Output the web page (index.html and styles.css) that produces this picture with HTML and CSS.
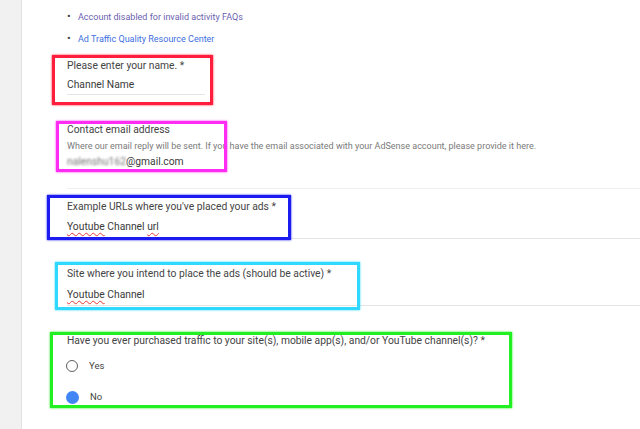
FILE: index.html
```html
<!DOCTYPE html>
<html lang="en">
<head>
    <meta charset="UTF-8" />
    <meta name="viewport" content="width=device-width, initial-scale=1.0" />
    <title>Invalid activity appeal form</title>
    <link rel="stylesheet" href="styles.css">
</head>
<body>
    <aside class="sidebar"></aside>

    <main class="form-page">
        <ul class="help-links">
            <li><a href="#" class="visited">Account disabled for invalid activity FAQs</a></li>
            <li><a href="#">Ad Traffic Quality Resource Center</a></li>
        </ul>

        <div class="field field-name">
            <span class="mark mark-red"></span>
            <div class="field-label">Please enter your name. *</div>
            <div class="field-value">Channel Name</div>
        </div>

        <div class="field field-email">
            <span class="mark mark-pink"></span>
            <div class="field-label">Contact email address</div>
            <div class="field-help">Where our email reply will be sent. If you have the email associated with your AdSense account, please provide it here.</div>
            <div class="field-value"><span class="blurred">nalenshu162</span>@gmail.com</div>
        </div>

        <div class="field field-urls">
            <span class="mark mark-blue"></span>
            <div class="field-label">Example URLs where you've placed your ads *</div>
            <div class="field-value"><span class="misspelled">Youtube</span> Channel <span class="misspelled">url</span></div>
        </div>

        <div class="field field-site">
            <span class="mark mark-cyan"></span>
            <div class="field-label">Site where you intend to place the ads (should be active) *</div>
            <div class="field-value"><span class="misspelled">Youtube</span> Channel</div>
        </div>

        <div class="field field-traffic">
            <span class="mark mark-green"></span>
            <div class="field-label">Have you ever purchased traffic to your site(s), mobile app(s), and/or YouTube channel(s)? *</div>
            <label class="radio-row">
                <span class="radio"></span>
                <span>Yes</span>
            </label>
            <label class="radio-row radio-no">
                <span class="radio checked"></span>
                <span>No</span>
            </label>
        </div>
    </main>
</body>
</html>
```

FILE: styles.css
```css
:root {
    --text-color: #444444;
    --help-color: #7a7a7a;
    --line-color: #e4e4e4;
    --link-color: #3d6fe0;
    --visited-color: #6b5fb0;
    --radio-blue: #4285f4;
}
html, body {
    margin: 0;
    padding: 0;
    height: 100%;
}
body {
    display: flex;
    font-family: Roboto, 'Liberation Sans', Arial, sans-serif;
    font-size: 10.3px;
    color: var(--text-color);
    background: #ffffff;
    overflow: hidden;
}
.sidebar {
    width: 21px;
    flex: none;
    background: #f1f1f1;
    border-right: 1px solid #e2e2e2;
}
.form-page {
    flex: 1;
    padding-left: 45px;
}
.help-links {
    list-style: none;
    margin: 6px 0 0;
    padding: 0;
    font-size: 9px;
}
.help-links li {
    line-height: 22px;
    position: relative;
    padding-left: 11px;
}
.help-links li::before {
    content: "\2022";
    position: absolute;
    left: 0;
    color: #444;
    font-size: 11px;
}
.help-links a {
    color: var(--link-color);
    text-decoration: none;
}
.help-links a.visited {
    color: var(--visited-color);
}
.field {
    position: relative;
}
.field-label {
    line-height: 16px;
}
.field-value {
    line-height: 16px;
    color: #3a3a3a;
}
.field-help {
    line-height: 14px;
    font-size: 9px;
    color: var(--help-color);
    margin-top: 1px;
}
.field-name {
    margin-top: 8px;
    width: 138px;
}
.field-name .field-value {
    margin-top: 3px;
    padding-bottom: 1px;
    border-bottom: 1px solid var(--line-color);
}
.field-email {
    margin-top: 27px;
}
.field-email .field-value {
    margin-top: 1px;
    padding-bottom: 18px;
    border-bottom: 1px solid #f0f0f0;
}
.field-urls {
    margin-top: 10px;
}
.field-urls .field-value {
    margin-top: 4px;
    padding-bottom: 3px;
    border-bottom: 1px solid var(--line-color);
}
.field-site {
    margin-top: 27px;
}
.field-site .field-value {
    margin-top: 5px;
    padding-bottom: 2px;
    border-bottom: 1px solid var(--line-color);
}
.field-traffic {
    margin-top: 27px;
}
.blurred {
    filter: blur(1.3px);
    color: #777;
}
.misspelled {
    text-decoration: underline wavy #e53935;
    text-decoration-thickness: 1px;
    text-underline-offset: 2px;
}
.radio-row {
    display: flex;
    align-items: center;
    gap: 11px;
    line-height: 16px;
    margin-top: 9px;
    margin-left: -1px;
    font-size: 9.5px;
}
.radio-no {
    margin-top: 15px;
}
.radio {
    width: 12px;
    height: 12px;
    box-sizing: border-box;
    border: 1.5px solid #5f5f5f;
    border-radius: 50%;
}
.radio.checked {
    border: none;
    width: 13px;
    height: 13px;
    background: var(--radio-blue);
}

/* annotation rectangles drawn over the form */
.mark {
    position: absolute;
    box-sizing: border-box;
    border: 3px solid;
    pointer-events: none;
}
.mark-red {
    border-color: #ff1e3c;
    box-shadow: 0 0 2px #ff1e3c;
    left: -15px;
    top: -3px;
    width: 161px;
    height: 50px;
}
.mark-pink {
    border-color: #ff2cf4;
    box-shadow: 0 0 2px #ff2cf4;
    left: -11px;
    top: -1px;
    width: 171px;
    height: 51px;
}
.mark-blue {
    border-color: #1c1cf0;
    box-shadow: 0 0 2px #1c1cf0;
    left: -20px;
    top: -4px;
    width: 244px;
    height: 45px;
}
.mark-cyan {
    border-color: #2ed8ff;
    box-shadow: 0 0 2px #2ed8ff;
    left: -12px;
    top: -4px;
    width: 305px;
    height: 48px;
}
.mark-green {
    border-color: #22f022;
    box-shadow: 0 0 2px #22f022;
    left: -17px;
    top: -1px;
    width: 462px;
    height: 76px;
}
```
